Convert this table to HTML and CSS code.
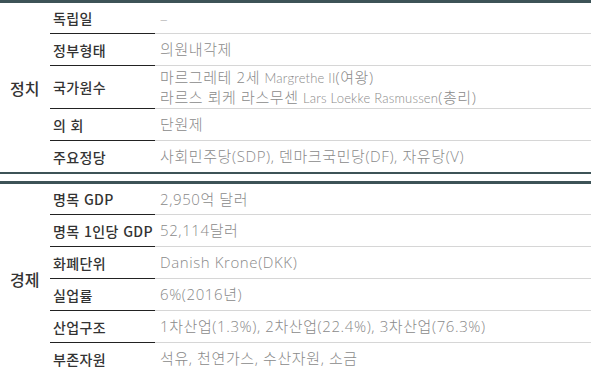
FILE: index.html
```html
<!DOCTYPE html>
<html lang="ko">
<head>
<meta charset="utf-8">
<link rel="stylesheet" href="styles.css">
</head>
<body>
<div class="info">
  <section class="group group-politics">
    <div class="group-title">정치</div>
    <div class="rows">
      <div class="row row-first"><div class="label">독립일</div><div class="value dash">–</div></div>
      <div class="row"><div class="label">정부형태</div><div class="value">의원내각제</div></div>
      <div class="row row-double"><div class="label">국가원수</div><div class="value">마르그레테 2세 <span class="en">Margrethe II</span>(여왕)<br>라르스 뢰케 라스무센 <span class="en">Lars Loekke Rasmussen</span>(총리)</div></div>
      <div class="row"><div class="label">의 회</div><div class="value">단원제</div></div>
      <div class="row row-last"><div class="label">주요정당</div><div class="value">사회민주당(SDP), 덴마크국민당(DF), 자유당(V)</div></div>
    </div>
  </section>
  <section class="group group-economy">
    <div class="group-title">경제</div>
    <div class="rows">
      <div class="row row-first"><div class="label">명목 GDP</div><div class="value">2,950억 달러</div></div>
      <div class="row"><div class="label">명목 1인당 GDP</div><div class="value">52,114달러</div></div>
      <div class="row"><div class="label">화폐단위</div><div class="value">Danish Krone(DKK)</div></div>
      <div class="row"><div class="label">실업률</div><div class="value">6%(2016년)</div></div>
      <div class="row"><div class="label">산업구조</div><div class="value">1차산업(1.3%), 2차산업(22.4%), 3차산업(76.3%)</div></div>
      <div class="row row-last"><div class="label">부존자원</div><div class="value">석유, 천연가스, 수산자원, 소금</div></div>
    </div>
  </section>
</div>
</body>
</html>
```

FILE: styles.css
```css
html, body {
  margin: 0;
  padding: 0;
  background: #ffffff;
}

body {
  font-family: "Noto Sans CJK KR", "Noto Sans", sans-serif;
  color: #222222;
  width: 591px;
  overflow: hidden;
}

.info {
  display: flex;
  flex-direction: column;
}

.group {
  display: flex;
  border-top: 3px solid #3d5357;
}

.group-politics {
  border-bottom: 2px solid #3d5357;
}

.group-economy {
  margin-top: 7px;
}

.group-title {
  width: 50px;
  flex: none;
  display: flex;
  align-items: center;
  padding-left: 10px;
  box-sizing: border-box;
  font-size: 16px;
  font-weight: 500;
  color: #333333;
}

.rows {
  flex: 1;
  display: flex;
  flex-direction: column;
}

.row {
  display: grid;
  grid-template-columns: 105px 1fr;
  height: 32px;
}

.row-first {
  height: 31px;
}

.row-double {
  height: 43px;
}

.row-last {
  height: 31px;
}

.label,
.value {
  display: flex;
  align-items: center;
  box-sizing: border-box;
  border-bottom: 1px solid #222222;
}

.label {
  padding-left: 3px;
  font-size: 14px;
  font-weight: 500;
  color: #333333;
  white-space: nowrap;
  letter-spacing: 0.4px;
}

.value {
  border-bottom-color: #d6d6d6;
  padding-left: 5px;
  font-family: "Open Sans", "Noto Sans CJK KR", sans-serif;
  font-weight: 300;
  font-size: 15px;
  letter-spacing: 0.6px;
  color: #8a8a8a;
  line-height: 19px;
  white-space: nowrap;
}

.row-double .value {
  display: block;
  padding-top: 2px;
}

.row-last .label,
.row-last .value {
  border-bottom: none;
}

.dash {
  color: #b5b5b5;
}

.en {
  font-family: "Lato", sans-serif;
  font-weight: 300;
  font-size: 13px;
  letter-spacing: 0.2px;
}
```
